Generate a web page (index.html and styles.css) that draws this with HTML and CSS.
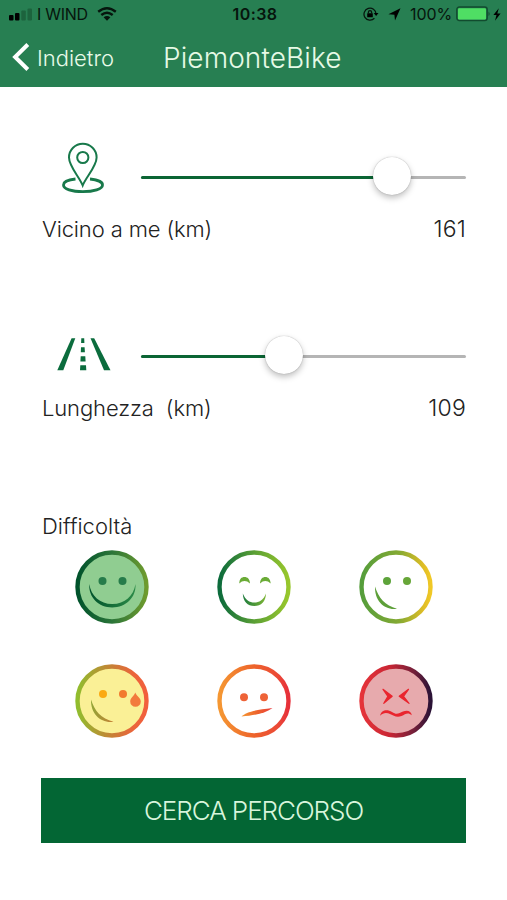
FILE: index.html
```html
<!DOCTYPE html>
<html lang="it">
  <head>
    <meta charset="UTF-8" />
    <title>PiemonteBike</title>
    <link rel="stylesheet" href="styles.css">
  </head>
  <body>
    <header class="header">
      <div class="status-bar">
        <div class="status-left">
          <svg class="signal" width="24" height="14" viewBox="0 0 24 14">
            <rect x="0" y="8" width="4.5" height="5.500" rx="1" />
            <rect x="6" y="6" width="4.5" height="7.500" rx="1" />
            <rect class="off" x="12.3" y="3.500" width="4.5" height="10" rx="1" />
            <rect class="off" x="18.5" y="1.500" width="4.5" height="12" rx="1" />
          </svg>
          <span class="carrier">I WIND</span>
          <svg class="wifi" width="20" height="14" viewBox="0 0 20 14">
            <path d="M1.2 4.8 Q10 -2.2 18.8 4.8" />
            <path d="M4.3 8 Q10 3.4 15.7 8" />
            <path class="dot" d="M6.6 10.3 Q10 7.5 13.4 10.3 L10 13.8 Z" />
          </svg>
        </div>
        <span class="clock">10:38</span>
        <div class="status-right">
          <svg class="lock" width="16" height="14" viewBox="0 0 16 14">
            <path class="ring" d="M11.4 11.3 A6 6 0 1 1 13 7" />
            <path d="M10.7 6 H15.5 L13.1 9 Z" />
            <rect x="4.2" y="6.2" width="5.6" height="4" rx=".5" />
            <path class="ring" d="M5.4 6.5 V5.2 a1.6 1.6 0 0 1 3.2 0 V6.5" />
          </svg>
          <svg class="arrow" width="13" height="13" viewBox="0 0 13 13">
            <path d="M12.5 .3 L7 12.6 L6.4 6.8 L.4 6.2 Z" />
          </svg>
          <span class="percent">100%</span>
          <svg class="battery" width="35" height="16" viewBox="0 0 35 16">
            <rect class="case" x=".8" y="1" width="30.4" height="13.6" rx="2.5" />
            <rect class="level" x="2" y="2.2" width="28" height="11.2" rx="1.2" />
            <path class="tip" d="M32.5 5.5 q2.3 2.3 0 4.6 Z" />
          </svg>
          <svg class="bolt" width="8" height="13" viewBox="0 0 8 13">
            <path d="M5.8 .3 L.4 7 H3.5 L2 12.7 L7.6 5.4 H4.3 Z" />
          </svg>
        </div>
      </div>
      <div class="nav">
        <a class="back" href="#">
          <svg width="18" height="29" viewBox="0 0 18 29">
            <path d="M15.800 1.500 L3.100 14 L15.800 26.500" />
          </svg>
          <span>Indietro</span>
        </a>
        <h1 class="title">PiemonteBike</h1>
      </div>
    </header>

    <main class="content">
      <section class="filter">
        <div class="filter-row">
          <svg class="filter-icon pin" viewBox="0 0 84 80">
            <path d="M41.7 48.5 C38.5 40 28 29.5 28 20.5 a13.8 13.8 0 0 1 27.6 0 C55.6 29.5 45 40 41.7 48.5 Z" />
            <circle cx="41.8" cy="20.5" r="5.6" />
            <path class="thick" d="M34.5 42 C27 42.700 22.500 45 22.500 47.900 C22.500 52 31 54.700 41.800 54.700 C52.500 54.700 61.500 52 61.500 47.900 C61.500 45 56.500 42.700 49 42" />
          </svg>
          <div class="slider">
            <div class="track"></div>
            <div class="fill near"></div>
            <div class="thumb near"></div>
          </div>
        </div>
        <div class="filter-info">
          <span class="label">Vicino a me (km)</span>
          <span class="value">161</span>
        </div>
      </section>

      <section class="filter">
        <div class="filter-row">
          <svg class="filter-icon road" viewBox="0 0 84 80">
            <path d="M30.600 22.300 H34.300 L22.300 54.300 H16.300 Z" />
            <path d="M49.500 22.300 H53.200 L69.500 54.300 H63 Z" />
            <path d="M40.300 22.300 H43.200 L43.400 27 H40.100 Z M40 31.300 H43.600 L43.900 36.300 H39.800 Z M39.700 40.300 H44.300 L44.600 45.500 H39.400 Z M39.300 49.300 H45 L45.300 54.300 H39 Z" />
          </svg>
          <div class="slider">
            <div class="track"></div>
            <div class="fill length"></div>
            <div class="thumb length"></div>
          </div>
        </div>
        <div class="filter-info">
          <span class="label">Lunghezza&nbsp; (km)</span>
          <span class="value">109</span>
        </div>
      </section>

      <h2 class="difficulty">Difficoltà</h2>
      <div class="faces">
        <svg class="face" viewBox="0 0 74 74">
          <defs>
            <linearGradient id="g1" x1="0" x2="1"><stop offset="0" stop-color="#00522b" /><stop offset=".5" stop-color="#2b7539" /><stop offset="1" stop-color="#6e9b2e" /></linearGradient>
            <linearGradient id="m1" x1="0" x2="1"><stop offset="0" stop-color="#00522b" /><stop offset="1" stop-color="#2c8b48" /></linearGradient>
          </defs>
          <circle cx="37" cy="37" r="34.500" fill="#90cd91" stroke="url(#g1)" stroke-width="4.400" />
          <circle cx="27.500" cy="31" r="4" fill="#267c4a" />
          <circle cx="47.500" cy="31" r="4" fill="#267c4a" />
          <path d="M14.300 34 C16 46 25 54 37.200 54 C50 54 58.500 46 60.500 34 C61.300 47.500 51 57.400 37.200 57.400 C23.500 57.400 13.500 47.500 14.300 34 Z" fill="url(#m1)" />
        </svg>
        <svg class="face" viewBox="0 0 74 74">
          <defs>
            <linearGradient id="g2" x1="0" x2="1"><stop offset="0" stop-color="#0c6b3c" /><stop offset=".5" stop-color="#5a9f35" /><stop offset="1" stop-color="#98c72c" /></linearGradient>
            <linearGradient id="m2" x1="0" x2="1"><stop offset="0" stop-color="#1c7a3c" /><stop offset="1" stop-color="#7db535" /></linearGradient>
          </defs>
          <circle cx="37" cy="37" r="34.500" fill="none" stroke="url(#g2)" stroke-width="4.400" />
          <path d="M22.300 33.500 C22.300 29 24.500 27 27.500 27 C30.500 27 32.800 29 33 33.500 C29.500 30.200 25.500 30.200 22.300 33.500 Z M43 33.500 C43.300 29 45.500 27 48.300 27 C51.200 27 53.300 29 53.700 33.500 C50.200 30.200 46.500 30.200 43 33.500 Z" fill="#6aab36" />
          <path d="M25.800 43.500 C28.500 50 32.500 52.600 37.300 52.600 C42 52.600 46.500 50 49 43.500 C48.800 51.500 44.200 56 37.300 56 C30.600 56 26 51.500 25.800 43.500 Z" fill="url(#m2)" />
        </svg>
        <svg class="face" viewBox="0 0 74 74">
          <defs>
            <linearGradient id="g3" x1="0" x2="1"><stop offset="0" stop-color="#559d3b" /><stop offset=".55" stop-color="#85aa33" /><stop offset=".9" stop-color="#e0bd26" /><stop offset="1" stop-color="#f0c826" /></linearGradient>
          </defs>
          <circle cx="37" cy="37" r="34.500" fill="none" stroke="url(#g3)" stroke-width="4.400" />
          <circle cx="28" cy="31" r="4" fill="#5da33a" />
          <circle cx="48" cy="31" r="4" fill="#67a638" />
          <path d="M16 36.500 C19.500 48 26 55.500 38 58.800 C25.500 60.500 15.500 51 16 36.500 Z" fill="#5d9f39" />
        </svg>
        <svg class="face" viewBox="0 0 74 74">
          <defs>
            <linearGradient id="g4" x1="0" x2="1"><stop offset="0" stop-color="#91bd2e" /><stop offset=".5" stop-color="#c78036" /><stop offset=".8" stop-color="#ea653b" /><stop offset="1" stop-color="#f25f3c" /></linearGradient>
            <linearGradient id="m4" x1="0" x2="1"><stop offset="0" stop-color="#91a536" /><stop offset="1" stop-color="#c78036" /></linearGradient>
          </defs>
          <circle cx="37" cy="37" r="34.500" fill="#faf096" stroke="url(#g4)" stroke-width="4.400" />
          <circle cx="28" cy="30" r="4" fill="#fba911" />
          <circle cx="48" cy="30" r="4" fill="#f27a2e" />
          <path d="M16 35.500 C19.500 47 26 54.500 38.500 57.800 C26 59.500 15.500 50 16 35.500 Z" fill="url(#m4)" />
          <path d="M60.300 28.500 C61.500 32 65.800 34 65.800 37.500 a5.300 5.300 0 0 1 -10.600 0 C55.200 34 59 32 60.300 28.500 Z" fill="#f27a3c" />
        </svg>
        <svg class="face" viewBox="0 0 74 74">
          <defs>
            <linearGradient id="g5" x1="0" x2="1"><stop offset="0" stop-color="#f59732" /><stop offset=".5" stop-color="#ed632b" /><stop offset=".85" stop-color="#eb4937" /><stop offset="1" stop-color="#e6303a" /></linearGradient>
          </defs>
          <circle cx="37" cy="37" r="34.500" fill="none" stroke="url(#g5)" stroke-width="4.400" />
          <circle cx="27" cy="33.200" r="4" fill="#ee6338" />
          <circle cx="47" cy="33.200" r="4" fill="#ee6338" />
          <path d="M24.500 52.500 C29 48 38 46 55.500 44 C49 49 38 51.500 24.500 52.500 Z" fill="url(#g5)" />
        </svg>
        <svg class="face" viewBox="0 0 74 74">
          <defs>
            <linearGradient id="g6" x1="0" x2="1"><stop offset="0" stop-color="#e5343a" /><stop offset=".4" stop-color="#ca2634" /><stop offset=".75" stop-color="#76203a" /><stop offset="1" stop-color="#2b1236" /></linearGradient>
          </defs>
          <circle cx="37" cy="37" r="34.500" fill="#e7aaad" stroke="url(#g6)" stroke-width="4.400" />
          <path d="M24 25.300 L33.200 32.200 L24.800 39.300 L28.900 32.300 Z M49.500 25.300 L40.200 32.200 L50 39.300 L44.500 32.300 Z" fill="#e9252e" stroke="#e9252e" stroke-width="1.200" stroke-linejoin="round" />
          <path d="M21 51.800 C22.500 45.300 28.500 45 33 48 C38 51.500 40 49 44 47.500 C48.500 45.700 52.200 47 52.800 51.300 C48.500 47.800 46.500 50.500 42.500 52 C37.500 53.800 34.500 51.500 31.500 50.200 C27.500 48.500 24.500 48.500 21 51.800 Z" fill="#e9252e" />
        </svg>
      </div>

      <button class="search" type="button">CERCA PERCORSO</button>
    </main>
  </body>
</html>
```

FILE: styles.css
```css
body, html {
    margin: 0;
    padding: 0;
    height: 100%;
    background-color: #fff;
    font-family: Inter, "Liberation Sans", sans-serif;
    font-weight: 300;
    color: #222;
    white-space: nowrap;
}

svg {
    display: block;
    flex: none;
}

/* status bar + navigation */
.header {
    height: 87px;
    background-color: #277f52;
    overflow: hidden;
}

.status-bar {
    display: grid;
    grid-template-columns: 1fr auto 1fr;
    align-items: center;
    height: 28px;
    padding: 0 6px 0 9px;
    color: #06150d;
    font-size: 16px;
    font-weight: 400;
}

.status-left,
.status-right {
    display: flex;
    align-items: center;
}

.status-right {
    justify-content: flex-end;
}

.signal .off {
    fill: #1c633d;
}

.carrier {
    margin-left: 4px;
    letter-spacing: -0.3px;
}

.wifi {
    margin-left: 9px;
    fill: none;
    stroke: #06150d;
    stroke-width: 2.4;
}

.wifi .dot {
    fill: #06150d;
    stroke: none;
}

.clock {
    font-weight: 600;
    letter-spacing: 0.4px;
}

.lock .ring {
    fill: none;
    stroke: #06150d;
    stroke-width: 1.3;
}

.arrow {
    margin-left: 9px;
}

.percent {
    margin-left: 9px;
    letter-spacing: -0.1px;
}

.battery {
    margin-left: 4px;
}

.battery .case {
    fill: none;
    stroke: #124b2f;
    stroke-width: 1.4;
}

.battery .level {
    fill: #4fde64;
}

.battery .tip {
    fill: #124b2f;
}

.bolt {
    margin-left: 2px;
}

.nav {
    display: grid;
    grid-template-columns: 151px auto 1fr;
    align-items: center;
    height: 59px;
    padding-left: 12px;
}

.back {
    display: flex;
    align-items: center;
    gap: 7px;
    color: #e9fbe9;
    font-size: 22px;
    font-weight: 350;
    text-decoration: none;
}

.back path {
    fill: none;
    stroke: #fff;
    stroke-width: 4;
}

.title {
    margin: 0;
    color: #e6fae6;
    font-size: 28px;
    font-weight: 300;
    letter-spacing: 0.1px;
}

/* filters */
.content {
    padding: 50px 41px 0;
}

.filter {
    height: 179px;
}

.filter-row {
    display: flex;
    height: 80px;
}

.filter-icon {
    width: 84px;
    height: 80px;
    margin-right: 16px;
}

.pin {
    fill: none;
    stroke: #18794b;
    stroke-width: 2;
}

.pin .thick {
    stroke-width: 2.8;
}

.road {
    fill: #0b6c3d;
}

.slider {
    position: relative;
    flex: 1;
}

.track,
.fill {
    position: absolute;
    top: 39px;
    left: 0;
    height: 3px;
    border-radius: 2px;
}

.track {
    width: 100%;
    background-color: #b5b5b5;
}

.fill {
    background-color: #0b6534;
}

.fill.near {
    width: 251px;
}

.fill.length {
    width: 143px;
}

.thumb {
    position: absolute;
    top: 20px;
    width: 38px;
    height: 38px;
    border-radius: 50%;
    background-color: #fff;
    box-shadow: 0 0 1px rgba(0, 0, 0, 0.35), 0 3px 6px rgba(0, 0, 0, 0.25);
}

.thumb.near {
    left: 232px;
}

.thumb.length {
    left: 124px;
}

.filter-info {
    display: flex;
    justify-content: space-between;
    font-size: 22px;
    line-height: 24px;
}

.label {
    letter-spacing: -0.13px;
}

.value {
    font-size: 23px;
    letter-spacing: 0.2px;
}

.difficulty {
    margin: 18px 0 0;
    font-size: 22px;
    font-weight: 300;
    line-height: 26px;
}

.label,
.difficulty {
    padding-left: 1px;
}

.faces {
    display: grid;
    grid-template-columns: repeat(3, 142px);
    row-gap: 40px;
    justify-content: center;
    justify-items: center;
    margin-top: 11px;
}

.face {
    width: 74px;
    height: 74px;
}

.search {
    width: 100%;
    height: 65px;
    margin-top: 40px;
    padding: 0;
    border: none;
    background-color: #036634;
    color: #d8f5dc;
    font-family: inherit;
    font-size: 26px;
    font-weight: 300;
    letter-spacing: -1.05px;
}
```
